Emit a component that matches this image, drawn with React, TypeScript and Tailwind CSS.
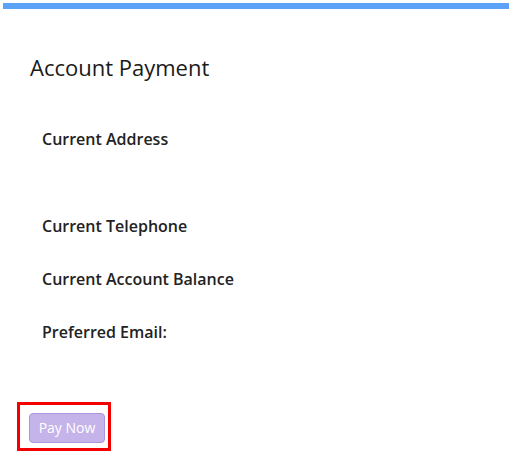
export default function App() {
  const labels = [
    { text: "Current Address", mt: "mt-[46px]" },
    { text: "Current Telephone", mt: "mt-[63px]" },
    { text: "Current Account Balance", mt: "mt-[29px]" },
    { text: "Preferred Email:", mt: "mt-[29px]" },
  ];

  return (
    <div className="w-[512px] h-[459px] bg-white overflow-hidden font-['Open_Sans',sans-serif] text-[#222]">
      {/* Top accent bar */}
      <div className="mx-[3px] mt-[3px] h-[6px] bg-[#5ca3f7]"></div>

      <h1 className="mt-[44px] pl-[30px] text-[22px] leading-[28px] font-medium text-[#1a1a1a]">
        Account Payment
      </h1>

      <div className="flex flex-col pl-[42px]">
        {labels.map((l) => (
          <div key={l.text} className={`${l.mt} text-[16px] leading-[24px] font-semibold`}>
            {l.text}
          </div>
        ))}
      </div>

      {/* Highlighted action */}
      <div className="mt-[58px] ml-[17px] w-[94px] h-[49px] border-[3px] border-[#f50000] pl-[9px] pt-[8px]">
        <button className="w-[76px] h-[30px] rounded-[4px] bg-[#c5b4e9] border border-[#ad94df] text-white text-[14px] leading-none">
          Pay Now
        </button>
      </div>
    </div>
  );
}
